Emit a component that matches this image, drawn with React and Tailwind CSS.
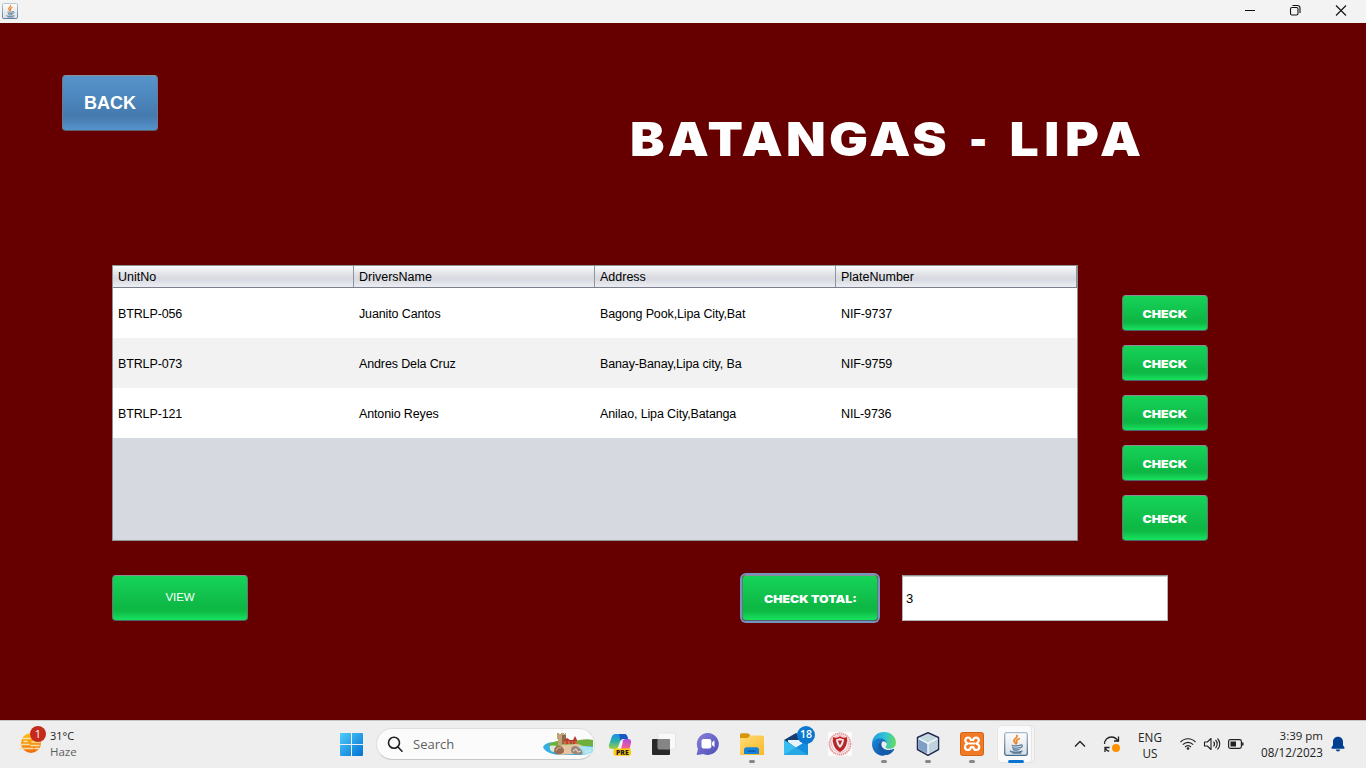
import React from "react";

const COLUMNS = ["UnitNo", "DriversName", "Address", "PlateNumber"];
const ROWS = [
  ["BTRLP-056", "Juanito Cantos", "Bagong Pook,Lipa City,Bat", "NIF-9737"],
  ["BTRLP-073", "Andres Dela Cruz", "Banay-Banay,Lipa city, Ba", "NIF-9759"],
  ["BTRLP-121", "Antonio Reyes", "Anilao, Lipa City,Batanga", "NIL-9736"],
];
const CHECK_HEIGHTS = ["h-9", "h-9", "h-9", "h-9", "h-[46px]"];

function JavaIcon({ className }) {
  return (
    <svg className={className} viewBox="0 0 24 24">
      <defs>
        <linearGradient id="javaBg" x1="0" y1="0" x2="0" y2="1">
          <stop offset="0" stopColor="#fdfdfd" />
          <stop offset="1" stopColor="#d9dee3" />
        </linearGradient>
        <linearGradient id="javaEdge" x1="0" y1="0" x2="0" y2="1">
          <stop offset="0" stopColor="#a9bccb" />
          <stop offset="1" stopColor="#456b8d" />
        </linearGradient>
      </defs>
      <rect x="0.7" y="0.7" width="22.6" height="22.6" rx="2" fill="url(#javaBg)" stroke="url(#javaEdge)" strokeWidth="1.3" />
      <g fill="none" strokeLinecap="round">
        <path d="M13 3.5c1.2 2.2-3.8 3.4-3 5.6.3 1 1.3 1.5 1.5 2.6M15.300 6.800c-2.200.8-3.500 1.700-2.700 3 .5.8.3 1.300-.2 1.900" stroke="#ef8426" strokeWidth="1.7" />
        <path d="M8.500 13.300c-1.600.5 5.700.9 8-.1M8.800 15.400c-.8.9 4.800.9 6.900.1M9.400 17.400c-.3.800 3.900.8 5.600.1M16.500 13.100c2.300-.9 2.600 1.700-.1 2.900M6.500 19c-1 1.200 8 1.700 11.500.1M9 21h8" stroke="#557c9d" strokeWidth="1.3" />
      </g>
    </svg>
  );
}

function GreenButton({ className, children }) {
  return (
    <button
      className={`flex items-center justify-center rounded-[4px] border border-t-[#8d8f92] border-x-[#5e7d70] border-b-[#52606a] bg-[linear-gradient(180deg,#16d358_0%,#12c64f_35%,#0db743_72%,#0eba45_80%,#18e25f_100%)] text-white ${className}`}
    >
      {children}
    </button>
  );
}

function HeavyLabel({ children }) {
  return (
    <span className="block scale-x-[1.12] pt-px font-['Inter',sans-serif] text-[11px] leading-4 font-black whitespace-nowrap">
      {children}
    </span>
  );
}

function TitleBar() {
  return (
    <header className="flex h-[23px] shrink-0 items-center justify-between bg-[#f3f3f3] pl-0.5">
      <JavaIcon className="mb-px size-4" />
      <div className="flex items-center pb-[3px]">
        <svg className="h-4 w-[46px]" viewBox="0 0 46 16" fill="none" stroke="#111" strokeWidth="1">
          <path d="M17 8.500h10" />
        </svg>
        <svg className="h-4 w-[46px]" viewBox="0 0 46 16" fill="none" stroke="#111" strokeWidth="1.1">
          <rect x="16.500" y="5.500" width="7.500" height="7.500" rx="1.500" />
          <path d="M18.500 3.500h5a2.500 2.500 0 0 1 2.500 2.500v5" />
        </svg>
        <svg className="h-4 w-[46px]" viewBox="0 0 46 16" fill="none" stroke="#111" strokeWidth="1.1">
          <path d="m16 3.500 10 10m0-10-10 10" />
        </svg>
      </div>
    </header>
  );
}

function DriversTable() {
  return (
    <div className="flex h-[276px] w-[966px] flex-col border border-[#8e9297] bg-[#d6d9e0] text-[12.5px] leading-4 text-black">
      <div className="grid h-[22px] shrink-0 grid-cols-[241px_241px_241px_241px] border-b border-[#7b818c] bg-[linear-gradient(180deg,#fbfbfc_0%,#e3e5e9_35%,#d6d9df_60%,#eceef4_100%)]">
        {COLUMNS.map((name) => (
          <div key={name} className="flex items-center border-r border-[#8f949d] pl-[5px]">
            {name}
          </div>
        ))}
      </div>
      {ROWS.map((row) => (
        <div key={row[0]} className="grid h-[50px] shrink-0 grid-cols-[241px_241px_241px_241px] items-center bg-white even:bg-white odd:bg-[#f2f2f2]">
          {row.map((cell) => (
            <div key={cell} className="pt-px pl-[5px] tracking-[-0.13px] whitespace-nowrap">{cell}</div>
          ))}
        </div>
      ))}
    </div>
  );
}

function Cell({ children, running }) {
  return (
    <div className="relative flex h-full w-11 shrink-0 items-center justify-center">
      {children}
      {running && <span className="absolute bottom-[5px] h-[3px] w-1.5 rounded-full bg-[#868686]" />}
    </div>
  );
}

function WeatherIcon() {
  return (
    <svg className="size-7 overflow-visible" viewBox="0 0 28 28">
      <defs>
        <linearGradient id="sun" x1="0" y1="0" x2="0" y2="1">
          <stop offset="0" stopColor="#ffc21a" />
          <stop offset="1" stopColor="#ee6c0c" />
        </linearGradient>
      </defs>
      <circle cx="12" cy="13" r="10" fill="url(#sun)" />
      <g stroke="#f6dfa6" strokeWidth="1.5" strokeLinecap="round">
        <path d="M4 8.500h7M13 12h8M1 14.500h9M12 15.500h8M1 18.500h13M16 18.500h4M5 11.500h3" />
      </g>
      <circle cx="19" cy="4" r="8" fill="#c42b1c" />
      <text x="19" y="8" textAnchor="middle" fontSize="11" fill="#fff" fontFamily="Open Sans, sans-serif">1</text>
    </svg>
  );
}

function IslandArt() {
  return (
    <svg className="h-6 w-[51px] shrink-0" viewBox="0 0 51 24">
      <path d="M0 15c2-4 7-5 13-5h37v8c-2 4-8 5-14 5H15C8 22 2 20 0 15Z" fill="#37aee3" />
      <path d="M6 12c6-3 13-5 22-3 8 0 14-3 22-1v6l-16 1-16 2-11-1Z" fill="#6fae3a" />
      <path d="M12 15c7-3 16-2 21-3 5 0 10 3 14 9l-32 2Z" fill="#e4c4a2" />
      <path d="M7 14c4-1 8 0 10 2 2 2-2 4-6 4-3 0-5-3-4-6Z" fill="#d8ead9" />
      <path d="M35 15c5-2 10 0 15 0v5c-5 3-10 3-12 2Z" fill="#a7e3f0" />
      <path d="M14 1h2v1h2V1h3v1h1V1h1v6h-1v6h-7V7h-1Z" fill="#c0a276" />
      <path d="M19 3h4v4h-1v5h-3Z" fill="#8a6a49" />
      <path d="M21 8l3-2 3 2h3l2-4 2 4v4H21Z" fill="#b53a2a" />
      <path d="M21 9h13v3H21Z" fill="#d8643f" />
      <path d="M24 9v3M28 9v3M31 9v3" stroke="#6d2a1e" strokeWidth=".8" />
      <path d="M11 19c0-4 3-6 6-5 4 1 5 5 3 7-3 2-9 2-9-2Z" fill="#9a6b52" />
      <path d="M13 19c1-3 3-4 5-3" stroke="#c79a7c" strokeWidth="1.5" fill="none" />
      <path d="M28 18c0-4 4-5 7-3s6 5 4 7c-4 1-11 1-11-4Z" fill="#9c8679" />
      <path d="m30 19 3-2 2 3 3-1" stroke="#ded1c5" strokeWidth="1.2" fill="none" />
      <path d="M43 20h1m2-1h1" stroke="#fff" strokeWidth="1" />
    </svg>
  );
}

function CopilotIcon() {
  return (
    <svg className="size-6" viewBox="0 0 24 24">
      <defs>
        <linearGradient id="cpA" x1="0" y1="0" x2="0" y2="1">
          <stop offset="0" stopColor="#1690ea" />
          <stop offset=".5" stopColor="#2db0a5" />
          <stop offset="1" stopColor="#a4cf3d" />
        </linearGradient>
        <linearGradient id="cpB" x1="0" y1="0" x2="0" y2="1">
          <stop offset="0" stopColor="#a64ee2" />
          <stop offset=".6" stopColor="#ec5d9a" />
          <stop offset="1" stopColor="#f9a04e" />
        </linearGradient>
      </defs>
      <path d="M8 2h8c2 0 3 1 3.500 3l.5 2h-5c-2 0-2.500 1-3 3l-1.500 4c-.5 2-1.500 3-3.500 3H4c-2.500 0-3.500-1.500-3-4L3.500 5.500C4.300 3 5.500 2 8 2Z" fill="url(#cpA)" />
      <path d="M11 2h5c2 0 3 1 3.500 3l.5 2h-5c-1 0-2 .5-2.500 2Z" fill="#1857c4" />
      <path d="M18 7h2c2.500 0 3.500 1.500 3 4l-1.500 6c-.6 2-2 3-4 3h-6c-1.500 0-2-1-1.500-2.500l2.500-1 1.500-6c.5-2 1.500-3.500 4-3.500Z" fill="url(#cpB)" />
      <path d="M12 9.500h3l-2 7.500h-4c2-1 2.500-4 3-7.500Z" fill="#f4eef6" />
      <rect x="5.500" y="16.500" width="17.500" height="7.300" rx="2" fill="#ffc90e" />
      <text x="14.300" y="22.600" textAnchor="middle" fontSize="6.800" fontWeight="800" fill="#222" fontFamily="Open Sans, sans-serif">PRE</text>
    </svg>
  );
}

function TaskViewIcon() {
  return (
    <svg className="size-6" viewBox="0 0 24 24">
      <rect x="0" y="7" width="18" height="16" rx="1" fill="#292929" />
      <rect x="6" y="1" width="17.500" height="16" rx="1" fill="#f9f9f9" stroke="#dadada" strokeWidth=".6" />
      <path d="M6 7h12v10H6Z" fill="#858585" />
    </svg>
  );
}

function ChatIcon() {
  return (
    <svg className="size-6" viewBox="0 0 24 24">
      <defs>
        <linearGradient id="chat" x1="0" y1="0" x2="1" y2="1">
          <stop offset="0" stopColor="#8b7fda" />
          <stop offset="1" stopColor="#4b4fb8" />
        </linearGradient>
      </defs>
      <path d="M12 1a11 11 0 1 1-4.800 21L1.500 23c-.8 0-1-.6-.7-1.200L2 17A11 11 0 0 1 12 1Z" fill="url(#chat)" />
      <rect x="5.500" y="7" width="9.800" height="9.500" rx="2" fill="#fff" />
      <path d="m16 10.500 2.500-2.200v7L16 13Z" fill="#fff" />
    </svg>
  );
}

function FolderIcon() {
  return (
    <svg className="size-6" viewBox="0 0 24 24">
      <defs>
        <linearGradient id="fold" x1="0" y1="0" x2="1" y2="1">
          <stop offset="0" stopColor="#ffdc74" />
          <stop offset="1" stopColor="#fbb829" />
        </linearGradient>
      </defs>
      <path d="M0 3c0-1 .7-1.700 1.700-1.700H7c1.300 0 2 .8 3 1.800V8H0Z" fill="#d9960c" />
      <path d="M0 6h7.500l3-2.500H22c1.200 0 2 .8 2 2V23H1c-.7 0-1-.4-1-1Z" fill="url(#fold)" />
      <path d="M4 22v-4c0-1.700 1-2.700 2.500-2.700h10c1.700 0 2.500 1 2.500 2.700v4Z" fill="#1683d8" />
      <path d="M7.500 18.500h8v1.300h-8Z" fill="#0c59a4" />
    </svg>
  );
}

function MailIcon() {
  return (
    <svg className="size-6" viewBox="0 0 24 24">
      <path d="M0 8 12 1l12 7v15H0Z" fill="#143c70" />
      <path d="M4 8h18v4l-10 4L4 10Z" fill="#e8f4fb" />
      <path d="M0 8v15h24V8l-12 8Z" fill="#2eaae9" />
      <path d="m0 8 24 15H0Z" fill="#38bdf0" />
      <path d="m12 15.500 12-7.500v15H1Z" fill="#1390dd" />
      <path d="M0 23 12 15.500 24 23Z" fill="#27a7e6" />
    </svg>
  );
}

function CrestIcon() {
  return (
    <svg className="size-6" viewBox="0 0 24 24">
      <rect width="24" height="24" fill="#fdfafa" />
      <circle cx="12" cy="12" r="10.500" fill="none" stroke="#e39a9b" strokeWidth="1.900" strokeDasharray="1.5 .5" />
      <circle cx="12" cy="12" r="8.400" fill="none" stroke="#d79a9b" strokeWidth=".8" />
      <path d="M5 5c2 1 5 1 7-1 2 2 5 2 7 1 .5 7-1 12-7 15C6 17 4.500 12 5 5Z" fill="#c42127" />
      <path d="M7 8c2 .8 3 .5 5-1 2 1.500 3 1.800 5 1-.2 4-2 7-5 9-3-2-4.800-5-5-9Z" fill="#8b4044" />
      <path d="M8 7c1.500.5 2.500 0 4-1 1.500 1 2.500 1.500 4 1-.2 4-1.500 7-4 9-2.500-2-3.800-5-4-9Z" fill="#f5e9e9" />
      <path d="M9.800 8.500h4.400l-2.200 5Z" fill="#c42127" />
    </svg>
  );
}

function EdgeIcon() {
  return (
    <svg className="size-6" viewBox="0 0 24 24">
      <defs>
        <linearGradient id="edgeTop" x1="0" y1=".3" x2="1" y2=".4">
          <stop offset="0" stopColor="#2499e5" />
          <stop offset=".55" stopColor="#31c5d3" />
          <stop offset="1" stopColor="#64db61" />
        </linearGradient>
        <linearGradient id="edgeLow" x1="0" y1="0" x2="1" y2="1">
          <stop offset="0" stopColor="#1b87da" />
          <stop offset="1" stopColor="#0f4f9d" />
        </linearGradient>
      </defs>
      <path d="M0 12C0 4.500 5.500 0 12 0c7 0 12 5 12 10.500 0 4-3 6.300-6.300 6.300-3 0-4.200-1-4.200-1.800 0-.7 1.200-1.200 1.200-3.100 0-2.500-2.300-4.700-5.500-4.700C5 7.200 1 9 0 12Z" fill="url(#edgeTop)" />
      <path d="M0 12c1-4 4.700-5.500 8.300-5.500 3.400 0 6.200 2 6.400 5C13.800 10 12.600 9.300 11 9.300c-3 1.200-4 4-3.300 7 .8 3.500 4 6 7.500 6-6.200 4-15.200-1-15.200-10.300Z" fill="url(#edgeLow)" />
      <path d="M11 9.300c-4 1-5.200 4.200-4.200 7.400 1.200 4 5.200 6.600 8.600 6.200 3-.8 5.300-2.800 6.600-5 .4-.8 0-1.200-.8-.8-1 .5-2.200.9-3.800.9-4.500 0-8-2.500-8-5.600 0-1.200.6-2.400 1.600-3.100Z" fill="#165ba9" />
    </svg>
  );
}

function CubeIcon() {
  return (
    <svg className="size-6" viewBox="0 0 24 24">
      <path d="M12 .8 22.500 5.500v12L12 23.300 1.500 17.500v-12Z" fill="#dce6ee" stroke="#202a55" strokeWidth="1.500" strokeLinejoin="round" />
      <path d="M12 2 21 6l-9 4.700L3 6Z" fill="#c3d9df" />
      <path d="M2.500 7 11.500 12v9.800l-9-4.800Z" fill="#7f9fc6" />
      <path d="m12.500 12 9-5v10l-9 4.800Z" fill="#bed3dc" />
      <path d="M3 6.700 12 11.300 21 6.700M12 11.500V22" fill="none" stroke="#f4f9fc" strokeWidth="1.100" />
    </svg>
  );
}

function XamppIcon() {
  return (
    <svg className="size-6" viewBox="0 0 24 24">
      <rect x=".5" y=".5" width="23" height="23" rx="2" fill="#ef7924" stroke="#d56313" />
      <path d="M8 5.500a2.700 2.700 0 0 0-2.700 3c.1 1.600 1.200 2.500 2.700 3-1.800.4-3 1.500-3 3.500 0 1.800 1.300 3 3 3s2.600-1.300 3-3h2.300c.3 1.700 1.200 3 2.900 3 1.800 0 3-1.300 3-3 0-2-1.300-3-3-3.500 1.400-.5 2.500-1.500 2.500-3.200A2.800 2.800 0 0 0 16 5.500c-1.500 0-2.500 1-2.800 2.500h-2.300C10.600 6.500 9.600 5.500 8 5.500ZM9 11.500h6" fill="none" stroke="#fff" strokeWidth="2.200" strokeLinejoin="round" />
    </svg>
  );
}

function Taskbar() {
  return (
    <footer className="flex h-12 shrink-0 items-center bg-[#eeeeee] font-['Open_Sans',sans-serif] text-[11.7px] text-[#222] shadow-[inset_0_1px_0_#c9c3c3]">
      <div className="flex w-[340px] shrink-0 items-center pl-[19px]">
        <WeatherIcon />
        <div className="pl-[3px] leading-4">
          <div className="text-[11px]">31°C</div>
          <div className="text-[11.5px] text-[#606060]">Haze</div>
        </div>
      </div>
      <svg className="mt-px size-[23px] shrink-0" viewBox="0 0 23 23">
        <defs>
          <linearGradient id="win" x1="0" y1="0" x2="1" y2="1">
            <stop offset="0" stopColor="#4fcdfb" />
            <stop offset="1" stopColor="#0371d2" />
          </linearGradient>
        </defs>
        <path d="M0 1a1 1 0 0 1 1-1h10v11H0ZM12 0h10a1 1 0 0 1 1 1v10H12ZM0 12h11v11H1a1 1 0 0 1-1-1ZM12 12h11v10a1 1 0 0 1-1 1H12Z" fill="url(#win)" />
      </svg>
      <div className="ml-[13px] flex h-8 w-[219px] shrink-0 items-center rounded-full border border-[#dedede] border-b-[#c8c8c8] bg-[#fbfbfb] pl-2.5">
        <svg className="size-4 shrink-0" viewBox="0 0 16 16" fill="none" stroke="#1f1f1f" strokeWidth="1.600">
          <circle cx="7" cy="6.800" r="5.500" />
          <path d="m11 11 4 4.200" strokeLinecap="round" />
        </svg>
        <span className="w-[140px] shrink-0 pt-px pl-2.5 text-[13px] text-[#606060]">Search</span>
        <IslandArt />
      </div>
      <div className="ml-[3px] flex h-full shrink-0">
        <Cell><CopilotIcon /></Cell>
        <Cell><TaskViewIcon /></Cell>
        <Cell><ChatIcon /></Cell>
        <Cell running><FolderIcon /></Cell>
        <Cell>
          <MailIcon />
          <span className="absolute top-[6px] right-[3px] flex size-[18px] items-center justify-center rounded-full bg-[#0b78d0] text-[10.5px] font-semibold text-white">18</span>
        </Cell>
        <Cell><CrestIcon /></Cell>
        <Cell running><EdgeIcon /></Cell>
        <Cell running><CubeIcon /></Cell>
        <Cell running><XamppIcon /></Cell>
        <Cell>
          <span className="absolute top-[5px] left-[10px] h-[38px] w-[31px] rounded-[4px] border border-[#e2e2e2] bg-[#f5f5f5]" />
          <span className="absolute top-[5px] left-[3px] h-[38px] w-[35px] rounded-[4px] border border-[#e5e5e5] bg-[#fafafa]" />
          <JavaIcon className="relative size-6" />
          <span className="absolute bottom-[5px] h-[3px] w-4 rounded-full bg-[#0a74d4]" />
        </Cell>
      </div>
      <div className="flex flex-1 items-center pl-[34px] text-[#222]">
        <svg className="h-6 w-4 shrink-0" viewBox="0 0 16 24" fill="none" stroke="#222" strokeWidth="1.400">
          <path d="m3 14.500 5-5 5 5" />
        </svg>
        <svg className="ml-[14px] size-5 shrink-0" viewBox="0 0 20 20" fill="none" stroke="#222" strokeWidth="1.300">
          <path d="M2.500 10c0-4 3-7 7-7 3 0 5 1.500 6.500 4M16.500 2.500V7H12M3 18v-4.500h4.500M3.200 14c.8 1.800 2 2.800 4 3.300" />
          <circle cx="14" cy="14" r="4" fill="#ff9100" stroke="none" />
        </svg>
        <div className="ml-2 w-[40px] pt-0.5 text-center leading-4">
          <div>ENG</div>
          <div>US</div>
        </div>
        <svg className="ml-[9px] h-5 w-[18px] shrink-0" viewBox="0 0 18 20" fill="none" stroke="#222" strokeWidth="1.200">
          <path d="M1.500 8.200c4-4.600 11-4.600 15 0M3.800 10.700c3-3.200 7.400-3.200 10.400 0M6.100 13c1.600-1.900 4.200-1.900 5.800 0" />
          <circle cx="9" cy="14.500" r="1.300" fill="#222" stroke="none" />
        </svg>
        <svg className="ml-[6px] h-5 w-[18px] shrink-0" viewBox="0 0 18 20" fill="none" stroke="#222" strokeWidth="1.100">
          <path d="M1.500 8h2.800l3.700-3.500v11L4.300 12H1.500Z" strokeLinejoin="round" />
          <path d="M10.500 7.700c1.200 1.300 1.200 3.300 0 4.600M12.500 6c2.200 2.200 2.200 5.800 0 8M14.500 4.500c3 3 3 8 0 11" />
        </svg>
        <svg className="ml-[6px] h-5 w-[18px] shrink-0" viewBox="0 0 18 20">
          <rect x="1.600" y="5.600" width="12.800" height="8.800" rx="1.800" fill="none" stroke="#222" strokeWidth="1.200" />
          <rect x="3.500" y="7.500" width="5.500" height="5" fill="#222" />
          <path d="M15 8.500h1.500v3H15Z" fill="#222" />
        </svg>
        <div className="ml-[9px] w-[69px] text-right leading-4 whitespace-nowrap">
          <div className="text-[11.5px]">3:39 pm</div>
          <div>08/12/2023</div>
        </div>
        <svg className="ml-[7px] h-4 w-4 shrink-0" viewBox="0 0 16 16" fill="#003e91">
          <path d="M8 .8c3 0 5 2.200 5 5v3.400l1.500 2.300c.3.600 0 1.200-.7 1.200H2.200c-.7 0-1-.6-.7-1.200L3 9.200V5.800c0-2.800 2-5 5-5ZM5.700 13.600h4.600c-.4 1.200-1.200 1.900-2.300 1.900s-1.900-.7-2.300-1.900Z" />
        </svg>
      </div>
    </footer>
  );
}

export default function App() {
  return (
    <div className="flex h-[768px] w-[1366px] flex-col overflow-hidden bg-[#660000] font-['Liberation_Sans',Arial,sans-serif]">
      <TitleBar />
      <main className="flex flex-1 flex-col">
        <div className="flex h-[242px] items-start pl-[62px]">
          <button className="mt-[52px] flex h-14 w-24 items-center justify-center rounded-[4px] border border-t-[#8d8f98] border-x-[#6a7d90] border-b-[#5a5f68] bg-[linear-gradient(180deg,#5893ca_0%,#4d89c0_35%,#457aae_72%,#487fb4_80%,#5694cd_100%)] text-[18px] font-bold text-white">
            BACK
          </button>
          <h1 className="mt-[86px] ml-[472px] origin-left scale-x-110 font-['Inter',sans-serif] text-[47px] leading-[60px] font-black tracking-[3px] whitespace-nowrap text-white [word-spacing:2px]">
            BATANGAS <span className="inline-block scale-x-75">-</span> <span className="tracking-[5.2px]">LIPA</span>
          </h1>
        </div>
        <div className="flex pl-[112px]">
          <DriversTable />
          <div className="ml-11 flex w-[86px] flex-col gap-[14px] pt-[30px]">
            {CHECK_HEIGHTS.map((height, i) => (
              <GreenButton key={i} className={`${height} w-full`}>
                <HeavyLabel>CHECK</HeavyLabel>
              </GreenButton>
            ))}
          </div>
        </div>
        <div className="flex items-start pt-[34px] pl-[112px]">
          <GreenButton className="h-[46px] w-[136px] text-[11.5px] tracking-[-0.15px]">VIEW</GreenButton>
          <GreenButton className="ml-[494px] h-[46px] w-[136px] ring-2 ring-[#7693bf]">
            <HeavyLabel>CHECK TOTAL:</HeavyLabel>
          </GreenButton>
          <input
            className="ml-6 h-[46px] w-[266px] border border-[#b5b5b5] border-t-[#929292] bg-white pl-[3px] text-[13px] text-black shadow-[inset_0_1px_0_#d2d2d2] outline-none"
            defaultValue="3"
          />
        </div>
      </main>
      <Taskbar />
    </div>
  );
}
